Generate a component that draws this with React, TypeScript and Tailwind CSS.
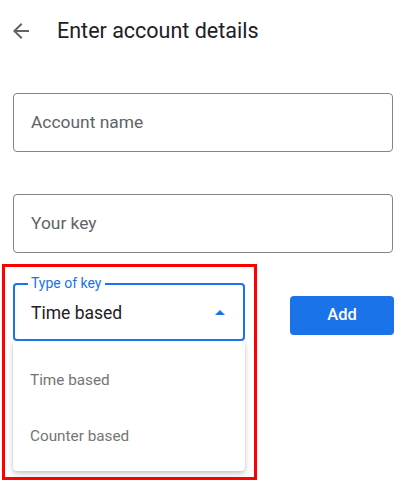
import { useState } from 'react';

const options = ['Time based', 'Counter based'];

export default function App() {
  const [keyType] = useState('Time based');

  return (
    <div className="h-[497px] w-[405px] bg-white font-['Roboto',sans-serif] text-[#202124]">
      <header className="flex h-[62px] items-center">
        <button className="ml-[9px] flex h-6 w-6 items-center justify-center text-[#5f6368]">
          <svg viewBox="0 0 24 24" className="h-6 w-6" fill="currentColor">
            <path d="M20 11H7.83l5.59-5.59L12 4l-8 8 8 8 1.41-1.41L7.83 13H20v-2z" />
          </svg>
        </button>
        <h1 className="ml-6 text-[21.5px] leading-none">Enter account details</h1>
      </header>

      <div className="mt-[31px] flex w-[393px] flex-col gap-[42px] pl-[13px]">
        <TextField placeholder="Account name" />
        <TextField placeholder="Your key" />
      </div>

      <div className="mt-[11px] flex items-start">
        <div className="ml-[2px] w-[255px] border-[3px] border-[#ff0000] pb-[6px] pl-[8px] pr-[9px] pt-[16px]">
          <div className="relative flex h-[58px] w-[232px] items-center justify-between rounded border-2 border-[#1a73e8] pl-[16px] pr-[18px]">
            <span className="absolute -top-[10px] left-[13px] bg-white px-[3px] text-[14px] leading-4 text-[#1a73e8]">Type of key</span>
            <span className="mt-[2px] text-[17.5px] text-[#202124]">{keyType}</span>
            <svg viewBox="0 0 10 5" className="h-[5px] w-[10px]" fill="#1a73e8">
              <path d="M0 5 5 0 10 5z" />
            </svg>
          </div>
          <ul className="flex h-[130px] w-[232px] flex-col justify-center rounded bg-white pt-[4px] shadow-[0_3px_6px_rgba(0,0,0,0.18),0_1px_3px_rgba(0,0,0,0.1)]">
            {options.map((option) => (
              <li key={option} className="flex h-[56px] items-center px-[17px] text-[15.3px] text-[#757575]">
                {option}
              </li>
            ))}
          </ul>
        </div>
        <button className="ml-[33px] mt-[32px] h-[39px] w-[104px] rounded bg-[#1a73e8] text-[16.5px] font-medium text-white">
          Add
        </button>
      </div>
    </div>
  );
}

function TextField({ placeholder }: { placeholder: string }) {
  return (
    <div className="flex h-[59px] items-center rounded border border-[#80868b] px-[17px] text-[17.4px] text-[#5f6368]">
      {placeholder}
    </div>
  );
}
